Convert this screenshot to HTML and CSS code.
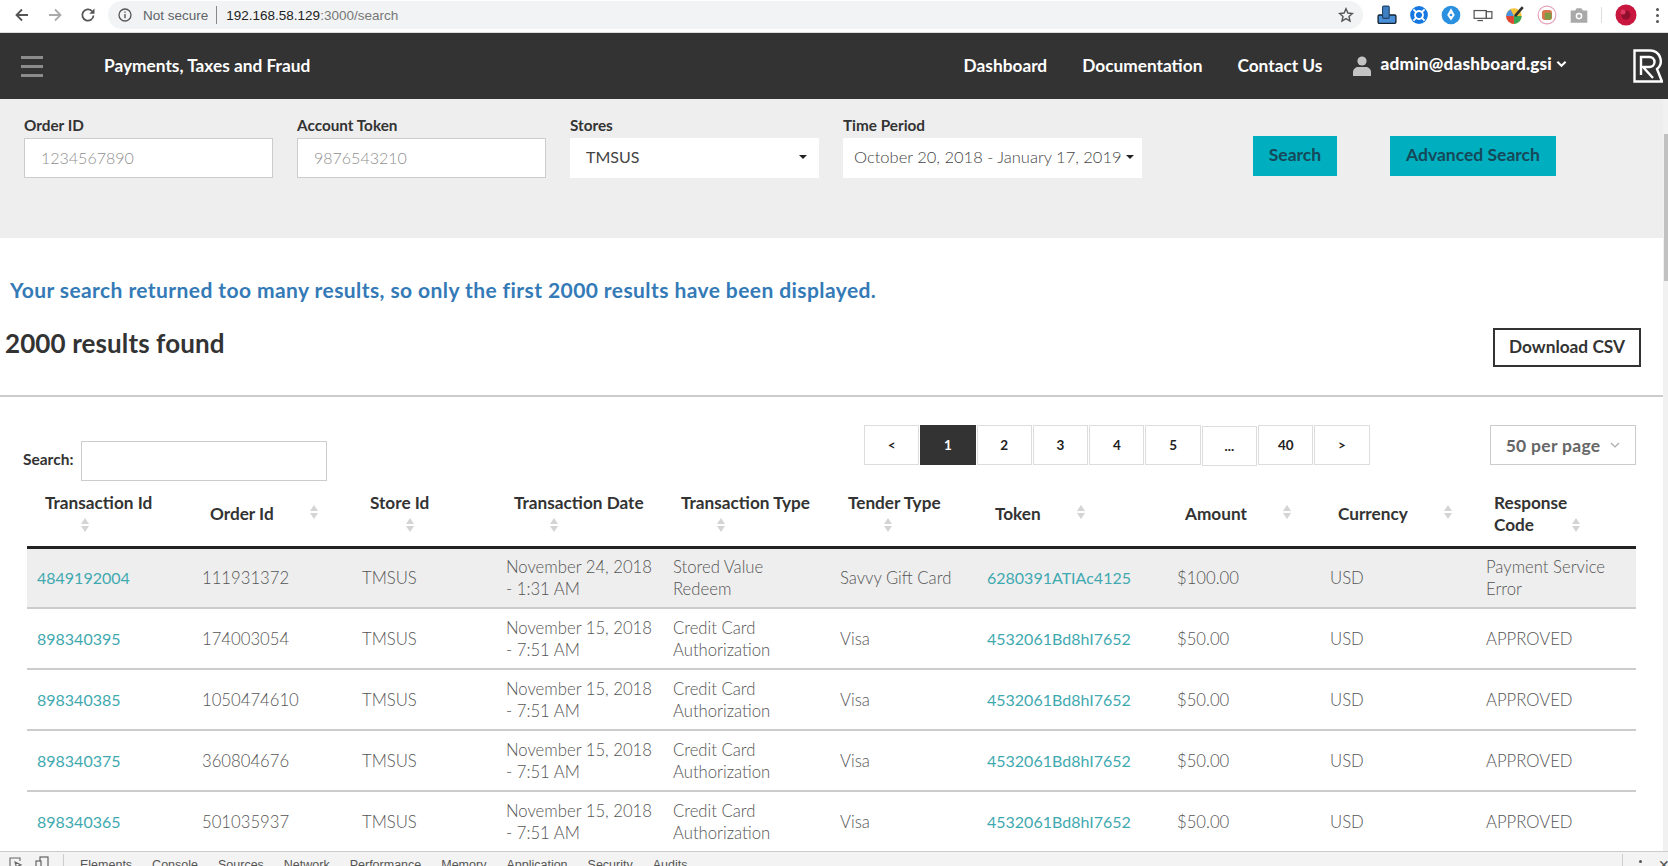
FILE: index.html
```html
<!DOCTYPE html>
<html lang="en">
<head>
<meta charset="utf-8">
<title>Payments, Taxes and Fraud</title>
<link rel="stylesheet" href="styles.css">
</head>
<body>
<div class="page">
  <div class="chrome">
    <svg class="c-nav" viewBox="0 0 16 16"><path d="M14 8H3M8 2.500 2.500 8 8 13.500" fill="none" stroke="#555" stroke-width="1.8"/></svg>
    <svg class="c-nav" viewBox="0 0 16 16"><path d="M2 8h11M8 2.500 13.500 8 8 13.500" fill="none" stroke="#aaa" stroke-width="1.8"/></svg>
    <svg class="c-nav" viewBox="0 0 16 16"><path d="M13.500 8.500A5.600 5.600 0 1 1 12 4.200" fill="none" stroke="#555" stroke-width="1.8"/><path d="M14.500 1.500v5.200H9.300z" fill="#555"/></svg>
    <div class="omni">
      <svg class="info" viewBox="0 0 14 14"><circle cx="7" cy="7" r="6" fill="none" stroke="#555" stroke-width="1.3"/><path d="M7 6v4.200M7 3.400v1.400" stroke="#555" stroke-width="1.4"/></svg>
      <span class="insecure">Not secure</span>
      <span class="omni-sep"></span>
      <span class="url">192.168.58.129<span class="url-rest">:3000/search</span></span>
      <svg class="star" viewBox="0 0 16 16"><path d="m8 1.800 1.900 4.200 4.500.5-3.400 3 1 4.500L8 11.600 4 14l1-4.500-3.400-3 4.500-.5z" fill="none" stroke="#555" stroke-width="1.4"/></svg>
    </div>
    <div class="exts">
      <svg class="ext" viewBox="0 0 18 18"><rect x="1" y="9" width="16" height="7.500" rx="1" fill="#4a90d9" stroke="#123" stroke-width="1.200"/><rect x="5" y="1" width="6" height="11" rx="1" fill="#3f7fc4" stroke="#246" stroke-width="1"/></svg>
      <svg class="ext" viewBox="0 0 18 18"><circle cx="9" cy="9" r="8" fill="#1678e0"/><circle cx="9" cy="9" r="3.600" fill="none" stroke="#fff" stroke-width="1.600"/><path d="M4 4l3 3M14 4l-3 3M4 14l3-3M14 14l-3-3" stroke="#fff" stroke-width="1.600"/></svg>
      <svg class="ext" viewBox="0 0 18 18"><circle cx="9" cy="9" r="8.400" fill="#2a90e0"/><path d="M9 3l3.400 6L9 14 5.600 9z" fill="#fff"/><circle cx="9" cy="9" r="1.200" fill="#2a90e0"/></svg>
      <svg class="ext" viewBox="0 0 18 18"><rect x="1" y="5" width="11" height="7" fill="#fff" stroke="#555" stroke-width="1.100"/><rect x="12" y="6" width="5" height="6" fill="#fff" stroke="#555" stroke-width="1.100"/><path d="M4 14h5" stroke="#555" stroke-width="1.100"/></svg>
      <svg class="ext" viewBox="0 0 18 18"><circle cx="8" cy="10" r="7" fill="#f5c23a"/><path d="M8 10 15 10A7 7 0 0 1 8 17z" fill="#3aa757"/><path d="M8 10 8 17A7 7 0 0 1 1 10z" fill="#e0453a"/><path d="M8 10 1 10A7 7 0 0 1 5 4z" fill="#4d8fe0"/><path d="M9 10 16 2" stroke="#333" stroke-width="2.400"/></svg>
      <svg class="ext" viewBox="0 0 18 18"><circle cx="9" cy="9" r="8" fill="#fff" stroke="#e5a0b8" stroke-width="1"/><rect x="4.500" y="4.500" width="9" height="9" rx="2.400" fill="#d9774f"/><rect x="7" y="7" width="6" height="6" rx="1" fill="#7d9b44"/></svg>
      <svg class="ext" viewBox="0 0 18 18"><path d="M1.500 5h4l1.400-2h4.200l1.400 2h4v11h-15z" fill="#a9a9a9"/><circle cx="9" cy="10" r="3" fill="#fff"/><circle cx="9" cy="10" r="1.700" fill="#a9a9a9"/></svg>
      <span class="ext-sep"></span>
      <svg class="profile" viewBox="0 0 22 22"><circle cx="11" cy="11" r="10.500" fill="#c8163f"/><circle cx="11" cy="11" r="4.500" fill="#8f0f2c"/><circle cx="8" cy="8" r="2.500" fill="#e03a63"/></svg>
      <span class="dots"><i></i><i></i><i></i></span>
    </div>
  </div>

  <header class="topbar">
    <span class="burger"><i></i><i></i><i></i></span>
    <span class="app-title">Payments, Taxes and Fraud</span>
    <nav class="topnav">
      <a class="nav-dash">Dashboard</a>
      <a class="nav-docs">Documentation</a>
      <a class="nav-contact">Contact Us</a>
      <span class="user">
        <svg class="avatar" viewBox="0 0 18 20"><circle cx="9" cy="5" r="4.600" fill="#c4c4c4"/><path d="M0 20v-4c0-3 3-5 5-5h8c2 0 5 2 5 5v4z" fill="#c4c4c4"/></svg>
        <span class="user-name">admin@dashboard.gsi</span>
        <svg class="user-chev" viewBox="0 0 12 8"><path d="M1.500 1.500 6 6l4.500-4.500" fill="none" stroke="#fff" stroke-width="2.200"/></svg>
      </span>
    </nav>
    <svg class="logo" viewBox="0 0 30 34"><path d="M1.500 32.500V1.500H17A10.500 10.500 0 0 1 24 20L29 32.500H1.500Z" fill="none" stroke="#fff" stroke-width="2.400"/><path d="M8 26V8H16.500A5 5 0 0 1 16.500 18H10L20 29" fill="none" stroke="#fff" stroke-width="2.400"/></svg>
  </header>

  <main class="content">
    <section class="filters">
      <div class="field">
        <label class="field-label">Order ID</label>
        <input class="field-input" type="text" placeholder="1234567890">
      </div>
      <div class="field">
        <label class="field-label">Account Token</label>
        <input class="field-input" type="text" placeholder="9876543210">
      </div>
      <div class="field">
        <label class="field-label">Stores</label>
        <div class="picker picker-store"><span>TMSUS</span><i class="caret"></i></div>
      </div>
      <div class="field field-wide">
        <label class="field-label">Time Period</label>
        <div class="picker picker-date"><span>October 20, 2018 - January 17, 2019</span><i class="caret"></i></div>
      </div>
      <button class="btn btn-search">Search</button>
      <button class="btn btn-advanced">Advanced Search</button>
    </section>

    <p class="notice">Your search returned too many results, so only the first 2000 results have been displayed.</p>

    <div class="results-row">
      <h2 class="results-title">2000 results found</h2>
      <button class="btn-download">Download CSV</button>
    </div>
    <hr class="rule">

    <div class="tools">
      <div class="table-search">
        <label class="table-search-label">Search:</label>
        <input class="table-search-input" type="text">
      </div>
      <div class="pager">
        <a class="page-btn">&lt;</a>
        <a class="page-btn is-current">1</a>
        <a class="page-btn">2</a>
        <a class="page-btn">3</a>
        <a class="page-btn">4</a>
        <a class="page-btn">5</a>
        <a class="page-btn is-gap">...</a>
        <a class="page-btn">40</a>
        <a class="page-btn">&gt;</a>
      </div>
      <div class="per-page">50 per page
        <svg class="per-chev" viewBox="0 0 10 6"><path d="M1 1l4 4 4-4" fill="none" stroke="#aaa" stroke-width="1.200"/></svg>
      </div>
    </div>

    <table class="grid">
      <colgroup>
        <col class="c1"><col class="c2"><col class="c3"><col class="c4"><col class="c5">
        <col class="c6"><col class="c7"><col class="c8"><col class="c9"><col class="c10">
      </colgroup>
      <thead>
        <tr>
          <th><span class="th-stack">Transaction Id<i class="sort"></i></span></th>
          <th><span class="th-side">Order Id<i class="sort"></i></span></th>
          <th><span class="th-stack">Store Id<i class="sort"></i></span></th>
          <th><span class="th-stack">Transaction Date<i class="sort"></i></span></th>
          <th><span class="th-stack">Transaction Type<i class="sort"></i></span></th>
          <th><span class="th-stack">Tender Type<i class="sort"></i></span></th>
          <th><span class="th-side">Token<i class="sort"></i></span></th>
          <th><span class="th-side">Amount<i class="sort"></i></span></th>
          <th><span class="th-side">Currency<i class="sort"></i></span></th>
          <th><span class="th-wrap"><span>Response<br>Code</span><i class="sort"></i></span></th>
        </tr>
      </thead>
      <tbody>
        <tr class="is-active">
          <td><a class="link">4849192004</a></td><td>111931372</td><td>TMSUS</td>
          <td>November 24, 2018 - 1:31 AM</td><td>Stored Value Redeem</td><td>Savvy Gift Card</td>
          <td><a class="link">6280391ATIAc4125</a></td><td>$100.00</td><td>USD</td><td>Payment Service Error</td>
        </tr>
        <tr>
          <td><a class="link">898340395</a></td><td>174003054</td><td>TMSUS</td>
          <td>November 15, 2018 - 7:51 AM</td><td>Credit Card Authorization</td><td>Visa</td>
          <td><a class="link">4532061Bd8hI7652</a></td><td>$50.00</td><td>USD</td><td>APPROVED</td>
        </tr>
        <tr>
          <td><a class="link">898340385</a></td><td>1050474610</td><td>TMSUS</td>
          <td>November 15, 2018 - 7:51 AM</td><td>Credit Card Authorization</td><td>Visa</td>
          <td><a class="link">4532061Bd8hI7652</a></td><td>$50.00</td><td>USD</td><td>APPROVED</td>
        </tr>
        <tr>
          <td><a class="link">898340375</a></td><td>360804676</td><td>TMSUS</td>
          <td>November 15, 2018 - 7:51 AM</td><td>Credit Card Authorization</td><td>Visa</td>
          <td><a class="link">4532061Bd8hI7652</a></td><td>$50.00</td><td>USD</td><td>APPROVED</td>
        </tr>
        <tr>
          <td><a class="link">898340365</a></td><td>501035937</td><td>TMSUS</td>
          <td>November 15, 2018 - 7:51 AM</td><td>Credit Card Authorization</td><td>Visa</td>
          <td><a class="link">4532061Bd8hI7652</a></td><td>$50.00</td><td>USD</td><td>APPROVED</td>
        </tr>
      </tbody>
    </table>
    <div class="scrollbar"><div class="scrollbar-thumb"></div></div>
  </main>

  <footer class="devtools">
    <svg class="dt-icon" viewBox="0 0 14 14"><path d="M1 11V2h10v3M6 6l6 3-3 1-1 3z" fill="none" stroke="#666" stroke-width="1.100"/></svg>
    <svg class="dt-icon" viewBox="0 0 14 14"><rect x="5" y="1" width="8" height="12" fill="none" stroke="#555" stroke-width="1.100"/><rect x="1" y="5" width="5" height="8" fill="#f3f3f3" stroke="#555" stroke-width="1.100"/></svg>
    <span class="dt-sep"></span>
    <span class="dt-tab">Elements</span>
    <span class="dt-tab">Console</span>
    <span class="dt-tab">Sources</span>
    <span class="dt-tab">Network</span>
    <span class="dt-tab">Performance</span>
    <span class="dt-tab">Memory</span>
    <span class="dt-tab">Application</span>
    <span class="dt-tab">Security</span>
    <span class="dt-tab">Audits</span>
    <span class="dt-spacer"></span>
    <span class="dt-sep"></span>
    <span class="dt-dots"><i></i><i></i></span>
    <span class="dt-close">&#10005;</span>
  </footer>
</div>
</body>
</html>
```

FILE: styles.css
```css
* { box-sizing: border-box; }
html, body { margin: 0; padding: 0; height: 100%; overflow: hidden; }
body { font-family: Lato, "Open Sans", sans-serif; color: #333; background: #fff; }

.page { width: 1668px; height: 866px; display: flex; flex-direction: column; overflow: hidden; }

/* browser toolbar */
.chrome { height: 33px; flex: none; display: flex; align-items: center; padding-left: 14px; padding-bottom: 2px; background: #fff; border-bottom: 1px solid #ddd; }
.c-nav { width: 16px; height: 16px; margin-right: 17px; flex: none; }
.omni { width: 1255px; height: 28px; margin-left: -5px; background: #f1f3f4; border-radius: 14px; display: flex; align-items: center; padding-left: 10px; padding-right: 9px; font: 13.5px "Liberation Sans", Arial, sans-serif; }
.info { width: 14px; height: 14px; margin-right: 11px; flex: none; }
.insecure { color: #5f6368; }
.omni-sep { width: 1px; height: 18px; background: #888; margin: 0 9px 0 8px; }
.url { color: #222; flex: 1; }
.url-rest { color: #777; }
.star { width: 16px; height: 16px; flex: none; }
.exts { display: flex; align-items: center; margin-left: 14px; }
.ext { width: 20px; height: 20px; margin-right: 12px; flex: none; }
.ext-sep { width: 1px; height: 16px; background: #ddd; margin: 0 13px 0 0; }
.profile { width: 22px; height: 22px; flex: none; margin-right: 19px; }
.dots { display: flex; flex-direction: column; gap: 3px; }
.dots i { width: 3px; height: 3px; border-radius: 50%; background: #555; display: block; }

/* app header */
.topbar { height: 66px; flex: none; background: #333; color: #fff; display: flex; align-items: center; padding-left: 21px; padding-bottom: 2px; font-size: 17.3px; font-weight: 700; }
.burger { width: 22px; display: flex; flex-direction: column; gap: 6px; flex: none; margin-top: 2px; }
.burger i { display: block; height: 3px; background: #8b8b8b; }
.app-title { margin-left: 61px; white-space: nowrap; }
.topnav { display: flex; align-items: center; margin-left: auto; white-space: nowrap; }
.nav-dash { margin-right: 35px; }
.nav-docs { margin-right: 35px; }
.nav-contact { margin-right: 31px; }
.user { display: flex; align-items: center; margin-top: -3px; }
.avatar { width: 18px; height: 20px; margin-right: 9px; margin-top: 5px; }
.user-name { font-weight: 900; letter-spacing: .2px; font-size: 17.2px; }
.user-chev { width: 11px; height: 8px; margin-left: 4px; }
.logo { width: 30px; height: 34px; margin-left: 66px; margin-right: 5px; margin-top: 2px; flex: none; }

/* content */
.content { flex: 1; position: relative; overflow: hidden; min-height: 0; }

.filters { height: 139px; background: #eee; display: flex; align-items: flex-start; padding: 16px 0 0 24px; }
.field { width: 249px; margin-right: 24px; flex: none; }
.field-wide { width: 299px; margin-right: 0; }
.field-label { display: block; height: 20px; line-height: 20px; margin-bottom: 3px; font-size: 15.3px; font-weight: 700; color: #333; }
.field-input { display: block; width: 100%; height: 40px; border: 1px solid #ccc; background: #fff; padding: 0 16px 2px; font: 300 16px Lato, sans-serif; color: #555; outline: 0; }
.field-input::placeholder { color: #8f8f8f; opacity: 1; }
.picker { height: 40px; background: #fff; display: flex; align-items: center; justify-content: space-between; font-size: 16.5px; font-weight: 300; color: #444; white-space: nowrap; }
.picker-store { padding: 0 12px 3px 16px; font-weight: 400; font-size: 16px; }
.picker-date { padding: 0 8px 2px 11px; }
.caret { width: 0; height: 0; border-left: 4px solid transparent; border-right: 4px solid transparent; border-top: 4px solid #222; flex: none; }
.btn { height: 40px; margin-top: 21px; border: 0; background: #00afbf; color: #15495a; font: 700 17.5px Lato, sans-serif; padding: 0 0 3px; flex: none; }
.btn-search { width: 84px; margin-left: 111px; }
.btn-advanced { width: 166px; margin-left: 53px; }

.notice { margin: 40px 0 0 10px; height: 24px; line-height: 24px; font-size: 21px; letter-spacing: .42px; font-weight: 700; color: #337ab7; white-space: nowrap; }

.results-row { display: flex; justify-content: space-between; align-items: flex-start; margin-top: 26px; padding: 0 27px 0 5px; }
.results-title { margin: 0; font-size: 26px; letter-spacing: .1px; line-height: 30px; font-weight: 700; color: #333; }
.btn-download { width: 148px; height: 39px; border: 2px solid #333; background: #fff; color: #333; font: 700 17.3px Lato, sans-serif; padding: 0 0 2px; }
.rule { margin: 28px 5px 0 0; border: 0; height: 2px; background: #ccc; }

.tools { display: flex; align-items: flex-start; margin-top: 28px; height: 58px; }
.table-search { display: flex; align-items: center; margin: 16px 0 0 23px; }
.table-search-label { font-size: 15.5px; font-weight: 700; margin-right: 8px; width: 50px; padding-bottom: 5px; white-space: nowrap; }
.table-search-input { width: 246px; height: 40px; border: 1px solid #ccc; background: #fff; outline: 0; }
.pager { display: flex; gap: 1px; margin-left: 537px; }
.page-btn { width: 55.3px; height: 40px; border: 1px solid #ddd; display: flex; align-items: center; justify-content: center; font-size: 13.5px; font-weight: 700; color: #222; background: #fff; }
.page-btn.is-current { background: #333; border-color: #333; color: #fff; }
.page-btn.is-gap { margin-top: 1px; }
.per-page { width: 146px; height: 40px; margin-left: 120px; border: 1px solid #ccc; display: flex; align-items: center; justify-content: space-between; padding: 0 15px; font-size: 17.5px; letter-spacing: .3px; font-weight: 700; color: #666; white-space: nowrap; }
.per-chev { width: 10px; height: 6px; flex: none; }

.grid { width: 1609px; margin-left: 27px; border-collapse: collapse; table-layout: fixed; }
.c1 { width: 165px; } .c2 { width: 160px; } .c3 { width: 144px; } .c4 { width: 167px; } .c5 { width: 167px; }
.c6 { width: 147px; } .c7 { width: 190px; } .c8 { width: 153px; } .c9 { width: 156px; } .c10 { width: 160px; }
.grid thead tr { height: 64px; }
.grid th { padding: 0 0 1px 18px; border-bottom: 3px solid #222; text-align: left; font-size: 17.2px; font-weight: 700; line-height: 22px; color: #333; vertical-align: middle; }
.th-stack { display: flex; flex-direction: column; align-items: flex-start; white-space: nowrap; }
.th-stack .sort { margin: 4px 0 4px 36px; }
.th-side { display: flex; align-items: center; white-space: nowrap; }
.th-side .sort { margin-left: 36px; margin-top: -3px; }
.th-wrap { display: flex; align-items: flex-end; }
.th-wrap .sort { margin: 0 0 4px 5px; }
.sort { position: relative; display: block; width: 8px; height: 14px; flex: none; }
.sort::before, .sort::after { content: ""; position: absolute; left: 0; border-left: 4px solid transparent; border-right: 4px solid transparent; }
.sort::before { top: 0; border-bottom: 6px solid #d4d4d4; }
.sort::after { bottom: 0; border-top: 6px solid #d4d4d4; }

.grid tbody tr { height: 61px; }
.grid td { padding: 0 10px; border-bottom: 2px solid #ccc; font-size: 16.7px; font-weight: 300; line-height: 22px; color: #555; vertical-align: middle; }
.grid tbody tr.is-active { background: #eee; }
.link { color: #3fa9b0; font-weight: 400; font-size: 16px; }

.scrollbar { position: absolute; top: 0; right: 0; bottom: 0; width: 5px; background: #f1f1f1; }
.scrollbar-thumb { margin: 35px 0 0 1px; height: 147px; background: #c1c1c1; }

/* devtools strip */
.devtools { height: 15px; flex: none; background: #f3f3f3; border-top: 1px solid #ccc; display: flex; align-items: flex-start; overflow: hidden; font: 12.5px "Liberation Sans", Arial, sans-serif; color: #555; padding-left: 9px; }
.dt-icon { width: 14px; height: 14px; margin: 4px 12px 0 0; flex: none; }
.dt-sep { width: 1px; height: 14px; background: #ccc; margin: 2px 16px 0 2px; flex: none; }
.dt-tab { margin-top: 6px; margin-right: 20px; white-space: nowrap; }
.dt-spacer { flex: 1; }
.dt-dots { display: flex; flex-direction: column; gap: 3px; margin: 8px 16px 0 0; }
.dt-dots i { display: block; width: 3px; height: 3px; background: #555; border-radius: 50%; }
.dt-close { margin: 5px -2px 0 0; font-size: 14px; color: #555; }
```
